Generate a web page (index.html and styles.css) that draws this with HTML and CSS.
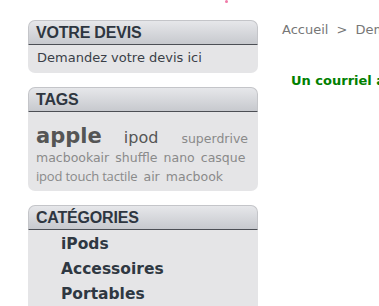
FILE: index.html
```html
<!DOCTYPE html>
<html lang="fr">
<head>
  <meta charset="UTF-8" />
  <title>Demande de devis</title>
  <link rel="stylesheet" href="styles.css">
</head>
<body>
  <span class="dot"></span>
  <div class="page">
    <div class="sidebar">

      <div class="box">
        <h3 class="box-title">VOTRE DEVIS</h3>
        <div class="box-body">
          <a href="#" class="devis-link">Demandez votre devis ici</a>
        </div>
      </div>

      <div class="box">
        <h3 class="box-title">TAGS</h3>
        <div class="box-body tags">
          <a href="#" class="tag-xl">apple</a>
          <a href="#" class="tag-l">ipod</a>
          <a href="#">superdrive</a>
          <a href="#">macbookair</a>
          <a href="#">shuffle</a>
          <a href="#">nano</a>
          <a href="#">casque</a>
          <a href="#" class="tag-alt">ipod touch tactile</a>
          <a href="#">air</a>
          <a href="#">macbook</a>
        </div>
      </div>

      <div class="box">
        <h3 class="box-title">CATÉGORIES</h3>
        <ul class="box-body cats">
          <li><a href="#">iPods</a></li>
          <li><a href="#">Accessoires</a></li>
          <li><a href="#">Portables</a></li>
        </ul>
      </div>

    </div>

    <div class="content">
      <div class="breadcrumb">Accueil <span class="sep">&gt;</span> Demande de devis</div>
      <p class="notice">Un courriel a été envoyé</p>
    </div>
  </div>
</body>
</html>
```

FILE: styles.css
```css
body { margin: 0; background: #fff; font-family: "DejaVu Sans", Verdana, sans-serif; overflow: hidden; }
a { text-decoration: none; }
.dot { position: absolute; left: 225px; top: 0; width: 3px; height: 3px; border-radius: 50%; background: #f07aa8; }
.page { display: flex; gap: 24px; padding: 20px 0 0 28px; white-space: nowrap; }
.sidebar { width: 230px; flex: none; }
.box { margin-bottom: 14px; }
.box-title { margin: 0; height: 23px; line-height: 24px; padding-left: 7px; font-family: "Liberation Sans", Arial, sans-serif; font-size: 16px; letter-spacing: -0.2px; font-weight: bold; color: #2e3640; background: linear-gradient(#e6e7ea, #c7c9ce); border: 1px solid #c4c5c9; border-bottom: 1px solid #4c4f55; border-radius: 7px 7px 0 0; }
.box-body { margin: 0; background: #e5e5e7; border-radius: 0 0 7px 7px; padding: 5px 8px 7px 9px; }
.devis-link { display: block; font-size: 13px; line-height: 16px; color: #3a3f47; letter-spacing: 0; }
.tags { padding: 15px 6px 5px 8px; white-space: normal; line-height: 18px; }
.tags a { font-size: 12.5px; color: #8a8a8a; margin-right: 1px; }
.tags .tag-xl { font-size: 21px; font-weight: bold; color: #555; margin-right: 17px; }
.tags .tag-l { font-size: 16px; color: #555; margin-right: 18px; }
.tags .tag-alt { font-family: "Open Sans", Tahoma, sans-serif; font-size: 13px; letter-spacing: -0.2px; }
.cats { list-style: none; padding: 2px 8px 6px 33px; }
.cats a { display: block; line-height: 25px; font-size: 15.5px; font-weight: bold; color: #2f3842; }
.content { padding-top: 1px; }
.breadcrumb { font-size: 13px; color: #777; line-height: 18px; }
.breadcrumb .sep { margin: 0 4px; }
.notice { margin: 34px 0 0 9px; font-size: 13px; font-weight: bold; color: #008000; }
```
